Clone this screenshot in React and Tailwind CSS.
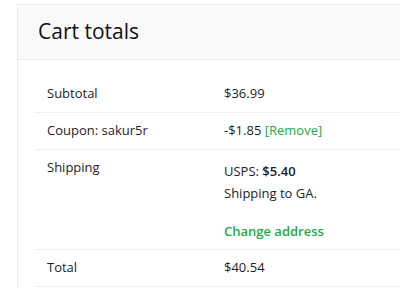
const rows = [
  { label: 'Subtotal', value: '$36.99' },
];

const App = () => {
  return (
    <div className="h-[290px] w-[400px] overflow-hidden bg-white pl-[17px] pt-[4px] font-['Open_Sans',sans-serif] text-[#1e1e1e]">
      <div className="w-[420px] border-l border-t border-[#ececec]">
        {/* Header */}
        <div className="flex h-[55px] items-center border-b border-[#ececec] bg-[#f9f9f9] pl-[20px]">
          <h2 className="text-[21px] font-medium text-[#111]">Cart totals</h2>
        </div>

        {/* Table */}
        <div className="pl-[17px] pt-[16px] text-[13px] font-medium">
          {rows.map((r) => (
            <div key={r.label} className="flex h-[37px] items-center border-b border-[#efefef]">
              <div className="w-[189px] pl-[12px]">{r.label}</div>
              <div>{r.value}</div>
            </div>
          ))}

          <div className="flex h-[37px] items-center border-b border-[#efefef]">
            <div className="w-[189px] pl-[12px]">Coupon: sakur5r</div>
            <div>
              -$1.85{' '}
              <a href="#" className="text-[#27a844]">[Remove]</a>
            </div>
          </div>

          <div className="flex h-[100px] border-b border-[#efefef] pt-[8px]">
            <div className="w-[189px] pl-[12px]">Shipping</div>
            <div className="flex flex-col">
              <div className="mt-[3px] leading-[20px]">
                USPS: <span className="font-semibold">$5.40</span>
              </div>
              <div className="mt-[2px] leading-[20px]">Shipping to GA.</div>
              <a href="#" className="mt-[18px] font-semibold leading-[20px] text-[#27a844]">
                Change address
              </a>
            </div>
          </div>

          <div className="flex h-[37px] items-center border-b border-[#efefef]">
            <div className="w-[189px] pl-[12px]">Total</div>
            <div>$40.54</div>
          </div>
        </div>
      </div>
    </div>
  );
};

export default App;
